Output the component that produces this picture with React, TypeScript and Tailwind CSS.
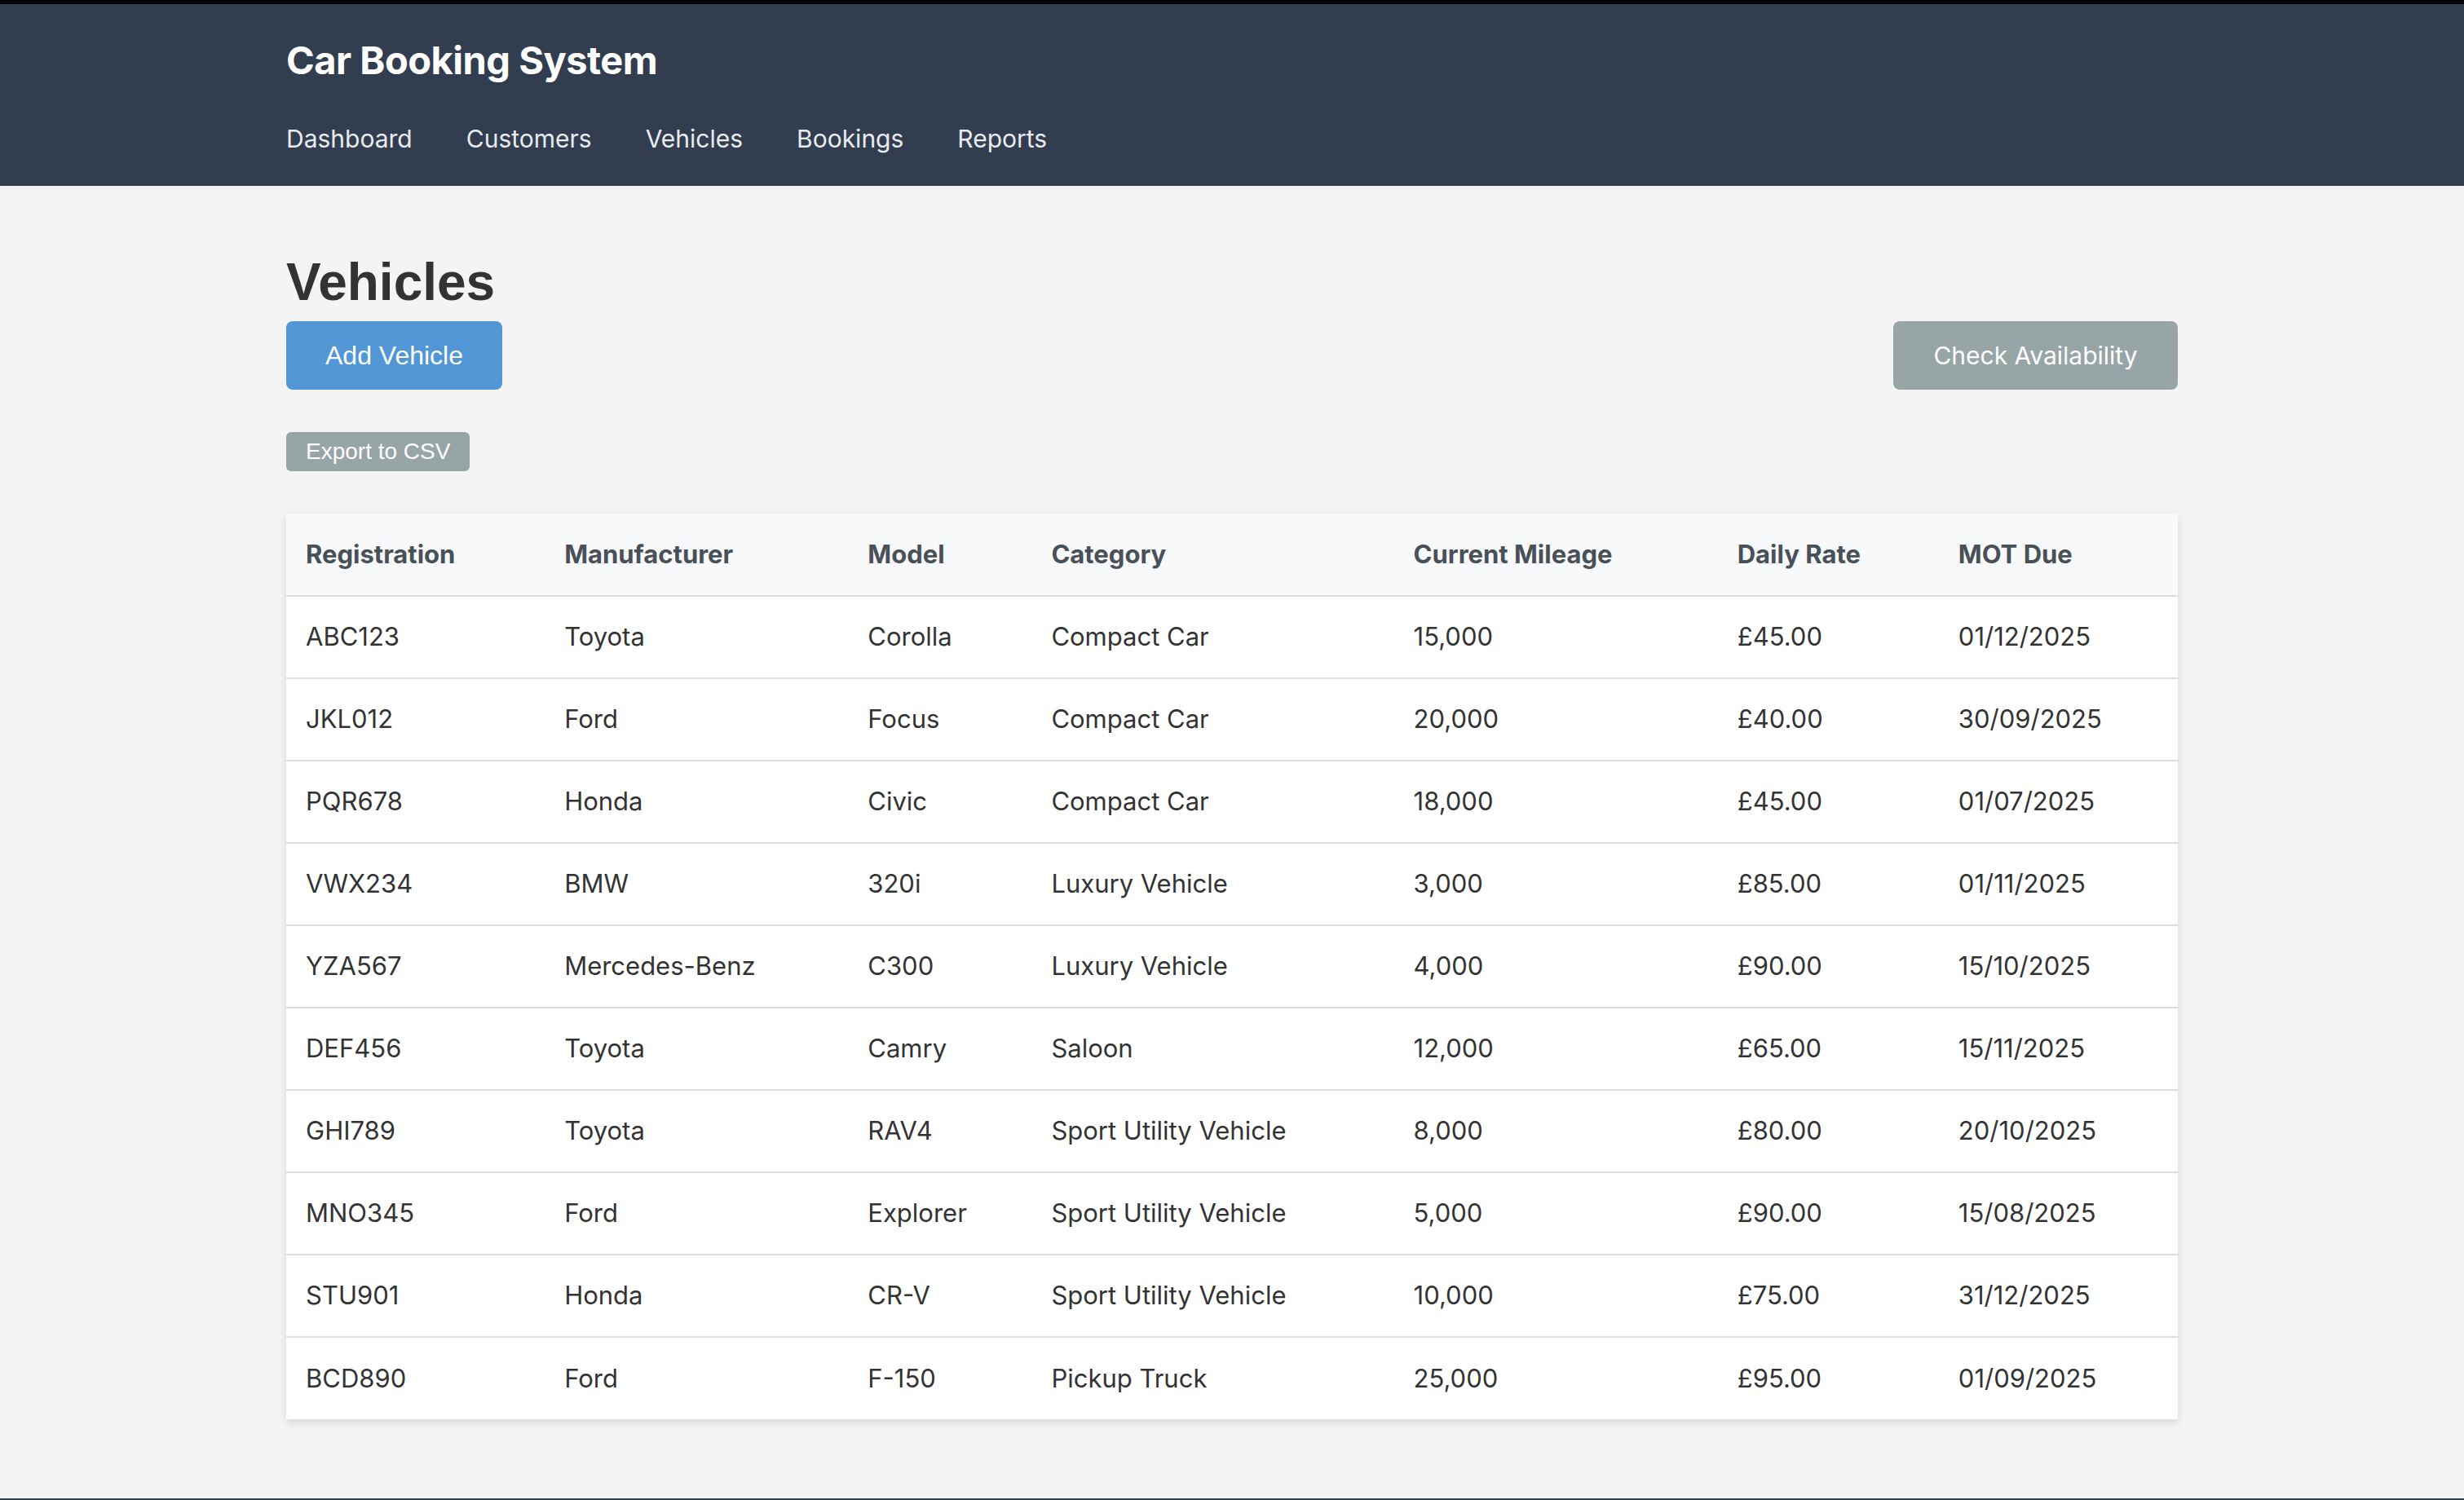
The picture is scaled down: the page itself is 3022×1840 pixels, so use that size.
import React from "react";

const rows = [
  ["ABC123", "Toyota", "Corolla", "Compact Car", "15,000", "£45.00", "01/12/2025"],
  ["JKL012", "Ford", "Focus", "Compact Car", "20,000", "£40.00", "30/09/2025"],
  ["PQR678", "Honda", "Civic", "Compact Car", "18,000", "£45.00", "01/07/2025"],
  ["VWX234", "BMW", "320i", "Luxury Vehicle", "3,000", "£85.00", "01/11/2025"],
  ["YZA567", "Mercedes-Benz", "C300", "Luxury Vehicle", "4,000", "£90.00", "15/10/2025"],
  ["DEF456", "Toyota", "Camry", "Saloon", "12,000", "£65.00", "15/11/2025"],
  ["GHI789", "Toyota", "RAV4", "Sport Utility Vehicle", "8,000", "£80.00", "20/10/2025"],
  ["MNO345", "Ford", "Explorer", "Sport Utility Vehicle", "5,000", "£90.00", "15/08/2025"],
  ["STU901", "Honda", "CR-V", "Sport Utility Vehicle", "10,000", "£75.00", "31/12/2025"],
  ["BCD890", "Ford", "F-150", "Pickup Truck", "25,000", "£95.00", "01/09/2025"],
];

const headers = ["Registration", "Manufacturer", "Model", "Category", "Current Mileage", "Daily Rate", "MOT Due"];
const widths = [317, 372, 225, 444, 397, 271, 293];

export default function App() {
  return (
    <div className="w-full bg-[#f4f4f4] font-['Inter',sans-serif]">
      <div className="h-[5px] bg-black" />
      <header className="bg-[#323e50] pt-[40px] pb-[38px]">
        <div className="max-w-[2400px] mx-auto px-[40px]">
          <h1 className="text-[47px] leading-[58px] font-bold text-white tracking-[-0.5px]">Car Booking System</h1>
          <nav className="mt-[48px] flex gap-[66px] text-[30px] leading-[39px] text-[#e8ebef]">
            <span>Dashboard</span>
            <span>Customers</span>
            <span>Vehicles</span>
            <span>Bookings</span>
            <span>Reports</span>
          </nav>
        </div>
      </header>
      <main className="h-[1610px] pt-[81px]">
        <div className="max-w-[2400px] mx-auto px-[40px]">
          <h2 className="font-['Liberation_Sans',Arial,sans-serif] font-bold text-[64px] leading-[74px] text-[#333333]">Vehicles</h2>
          <div className="mt-[11px] flex justify-between items-start">
            <button className="h-[84px] px-[48px] rounded-[8px] bg-[#5296d5] text-white text-[32px] font-['Liberation_Sans',Arial,sans-serif]">
              Add Vehicle
            </button>
            <button className="h-[84px] w-[349px] rounded-[8px] bg-[#97a5a6] text-white text-[30px]">
              Check Availability
            </button>
          </div>
          <div className="mt-[52px]">
            <button className="h-[48px] px-[24px] rounded-[6px] bg-[#97a5a6] text-white text-[28px] font-['Liberation_Sans',Arial,sans-serif]">
              Export to CSV
            </button>
          </div>
          <div className="mt-[52px] bg-white shadow-[0_4px_10px_rgba(0,0,0,0.12)]">
            <table className="w-full table-fixed border-collapse">
              <colgroup>
                {widths.map((w, i) => (
                  <col key={i} style={{ width: w }} />
                ))}
              </colgroup>
              <thead>
                <tr className="bg-[#f8f9fa] border-b-2 border-[#dddddd]">
                  {headers.map((h) => (
                    <th key={h} className="h-[101px] px-[24px] text-left text-[31px] font-bold text-[#495057]">
                      {h}
                    </th>
                  ))}
                </tr>
              </thead>
              <tbody>
                {rows.map((r, i) => (
                  <tr key={r[0]} className={i < rows.length - 1 ? "border-b-2 border-[#dddddd]" : ""}>
                    {r.map((c, j) => (
                      <td key={j} className="h-[101px] px-[24px] text-[31px] text-[#333333] whitespace-nowrap">
                        {c}
                      </td>
                    ))}
                  </tr>
                ))}
              </tbody>
            </table>
          </div>
        </div>
      </main>
      <footer className="h-[80px] bg-[#323e50]" />
    </div>
  );
}
